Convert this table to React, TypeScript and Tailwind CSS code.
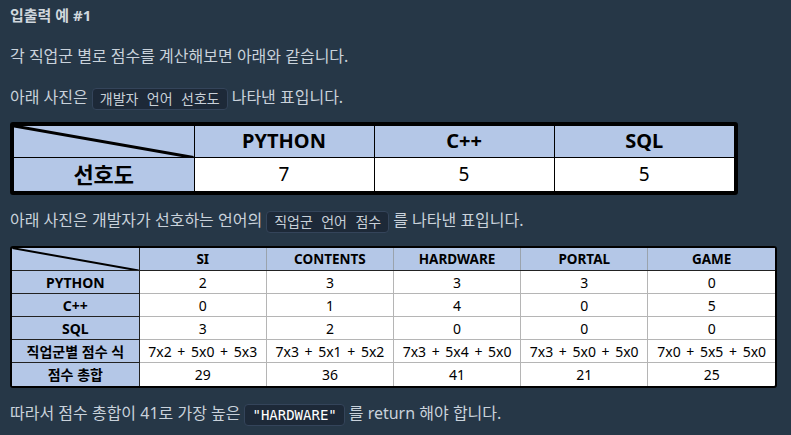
import React from "react";

const sans = "font-['Noto_Sans','Noto_Sans_CJK_KR',sans-serif]";
const mono = "font-['DejaVu_Sans_Mono','Noto_Sans_CJK_KR',monospace]";
const cellFont = "font-['Noto_Sans','Noto_Sans_CJK_KR',sans-serif]";

const Code: React.FC<{ children: React.ReactNode; bright?: boolean }> = ({ children, bright }) => (
  <code
    className={`${mono} inline-block mx-[4px] px-[7px] h-[22px] leading-[20px] rounded-[4px] border border-[#34445a] bg-[#1d2938] text-[14px] align-middle ${
      bright ? "text-white" : "text-[#c8d0d8]"
    }`}
  >
    {children}
  </code>
);

const Diagonal: React.FC<{ stroke: number }> = ({ stroke }) => (
  <svg className="absolute inset-0 w-full h-full" preserveAspectRatio="none" viewBox="0 0 100 100">
    <line x1="0" y1="0" x2="100" y2="100" stroke="#000" strokeWidth={stroke} vectorEffect="non-scaling-stroke" />
  </svg>
);

const prefCols = ["PYTHON", "C++", "SQL"];
const prefVals = ["7", "5", "5"];

const jobs = ["SI", "CONTENTS", "HARDWARE", "PORTAL", "GAME"];
const rows: { label: string; vals: string[]; top?: boolean }[] = [
  { label: "PYTHON", vals: ["2", "3", "3", "3", "0"] },
  { label: "C++", vals: ["0", "1", "4", "0", "5"] },
  { label: "SQL", vals: ["3", "2", "0", "0", "0"] },
  {
    label: "직업군별 점수 식",
    vals: [
      "7x2 + 5x0 + 5x3",
      "7x3 + 5x1 + 5x2",
      "7x3 + 5x4 + 5x0",
      "7x3 + 5x0 + 5x0",
      "7x0 + 5x5 + 5x0",
    ],
    top: true,
  },
  { label: "점수 총합", vals: ["29", "36", "41", "21", "25"], top: true },
];

export default function App() {
  return (
    <div className={`${sans} w-[791px] h-[435px] bg-[#263747] text-[#c9d2db] px-[10px] pt-[3px] overflow-hidden`}>
      <h4 className="text-[15px] font-bold leading-[24px] text-[#d0d7de]">입출력 예 #1</h4>

      <p className="mt-[17px] text-[16px] leading-[24px]">각 직업군 별로 점수를 계산해보면 아래와 같습니다.</p>

      <p className="mt-[17px] text-[16px] leading-[24px]">
        아래 사진은<Code>개발자 언어 선호도</Code>나타낸 표입니다.
      </p>

      <div className="mt-[12px] w-[728px] border-[4px] border-black rounded-[3px] bg-white overflow-hidden">
        <table className={`${cellFont} w-full table-fixed border-collapse text-black`}>
          <tbody>
            <tr className="h-[32px] bg-[#b4c7e7]">
              <td className="relative border-r border-b border-black p-0">
                <Diagonal stroke={3} />
              </td>
              {prefCols.map((c, i) => (
                <td
                  key={c}
                  className={`border-b border-black text-center text-[20px] font-bold p-0 ${i < 2 ? "border-r" : ""}`}
                >
                  {c}
                </td>
              ))}
            </tr>
            <tr className="h-[31px]">
              <td className="bg-[#b4c7e7] border-r border-black text-center text-[22px] font-bold p-0">선호도</td>
              {prefVals.map((v, i) => (
                <td key={i} className={`text-center text-[19px] p-0 ${i < 2 ? "border-r border-black" : ""}`}>
                  {v}
                </td>
              ))}
            </tr>
          </tbody>
        </table>
      </div>

      <p className="mt-[13px] text-[16px] leading-[24px]">
        아래 사진은 개발자가 선호하는 언어의<Code>직업군 언어 점수</Code>를 나타낸 표입니다.
      </p>

      <div className="mt-[13px] w-[767px] border-2 border-black rounded-[3px] bg-white overflow-hidden">
        <table className={`${cellFont} w-full table-fixed border-collapse text-black text-[14px]`}>
          <tbody>
            <tr className="h-[23px] bg-[#b4c7e7]">
              <td className="relative border-r border-b border-[#222] p-0">
                <Diagonal stroke={2} />
              </td>
              {jobs.map((j, i) => (
                <td
                  key={j}
                  className={`border-b border-[#222] text-center text-[13.5px] font-bold p-0 ${
                    i < 4 ? "border-r border-r-[#9aa3ad]" : ""
                  }`}
                >
                  {j}
                </td>
              ))}
            </tr>
            {rows.map((r, ri) => (
              <tr key={r.label} className="h-[23px]">
                <td
                  className={`bg-[#b4c7e7] border-r border-[#222] text-center font-bold p-0 ${
                    ri < rows.length - 1 ? "border-b" : ""
                  } ${r.top ? "border-t" : ""}`}
                >
                  {r.label}
                </td>
                {r.vals.map((v, i) => (
                  <td
                    key={i}
                    className={`text-center p-0 whitespace-nowrap [word-spacing:2px] ${
                      i < 4 ? "border-r border-r-[#b5b5b5]" : ""
                    } ${ri < rows.length - 1 ? "border-b border-b-[#b5b5b5]" : ""} ${
                      r.top ? "border-t border-t-[#444]" : ""
                    }`}
                  >
                    {v}
                  </td>
                ))}
              </tr>
            ))}
          </tbody>
        </table>
      </div>

      <p className="mt-[13px] text-[16px] leading-[24px]">
        따라서 점수 총합이 41로 가장 높은<Code bright>"HARDWARE"</Code>를 return 해야 합니다.
      </p>
    </div>
  );
}
